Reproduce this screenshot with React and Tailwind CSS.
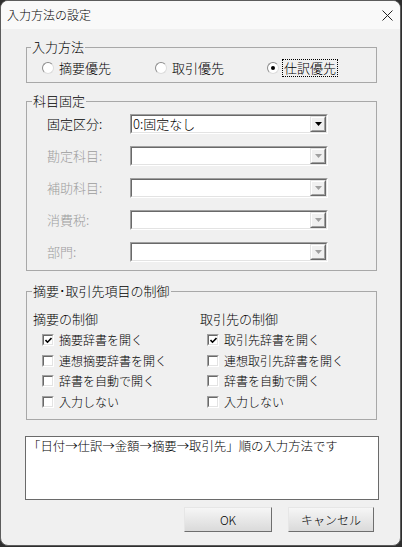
import React from "react";

function Radio({ label, checked, focused, width }) {
  return (
    <div className={`flex items-center h-[18px] ${width}`}>
      <span className="w-[12px] h-[12px] rounded-full bg-white border border-t-[#8c8c8c] border-l-[#8c8c8c] border-b-[#dcdcdc] border-r-[#dcdcdc] flex items-center justify-center shrink-0">
        {checked && <span className="w-[4px] h-[4px] rounded-full bg-black" />}
      </span>
      <span
        className={`ml-[3px] px-[1px] h-[18px] flex items-center border ${
          focused ? "border-dotted border-black" : "border-transparent"
        }`}
      >
        {label}
      </span>
    </div>
  );
}

function Arrow({ disabled }) {
  return (
    <svg width="7" height="4" viewBox="0 0 7 4">
      <polygon points="0,0 7,0 3.5,4" fill={disabled ? "#a0a0a0" : "#000"} />
    </svg>
  );
}

function Combo({ value, disabled }) {
  return (
    <div className="w-[198px] h-[20px] border border-t-[#a0a0a0] border-l-[#a0a0a0] border-b-white border-r-white">
      <div className="h-full flex items-center bg-white border border-t-[#696969] border-l-[#696969] border-b-[#e3e3e3] border-r-[#e3e3e3]">
        <span className="flex-1 pl-[1px] text-[13px] leading-[16px] text-black">
          {value}
        </span>
        <div className="w-[16px] h-[16px] border border-t-[#e3e3e3] border-l-[#e3e3e3] border-b-[#696969] border-r-[#696969]">
          <div className="w-full h-full flex items-center justify-center bg-[#f0f0f0] border border-t-white border-l-white border-b-[#a0a0a0] border-r-[#a0a0a0]">
            <Arrow disabled={disabled} />
          </div>
        </div>
      </div>
    </div>
  );
}

function Check({ label, checked }) {
  return (
    <div className="flex items-center h-[20.5px]">
      <span className="w-[12px] h-[12px] shrink-0 border border-t-[#a0a0a0] border-l-[#a0a0a0] border-b-white border-r-white">
        <span className="w-full h-full flex items-center justify-center bg-white border border-t-[#696969] border-l-[#696969] border-b-[#e3e3e3] border-r-[#e3e3e3]">
          {checked && (
            <svg width="7" height="7" viewBox="0 0 7 7">
              <path d="M0.5 3 L2.5 5.2 L6.5 1" stroke="#000" strokeWidth="1.6" fill="none" />
            </svg>
          )}
        </span>
      </span>
      <span className="ml-[5px] text-[12px] leading-[16px]">{label}</span>
    </div>
  );
}

const rows = [
  { label: "固定区分:", value: "0:固定なし", disabled: false },
  { label: "勘定科目:", value: "", disabled: true },
  { label: "補助科目:", value: "", disabled: true },
  { label: "消費税:", value: "", disabled: true },
  { label: "部門:", value: "", disabled: true },
];

const tekiyo = [
  { label: "摘要辞書を開く", checked: true },
  { label: "連想摘要辞書を開く", checked: false },
  { label: "辞書を自動で開く", checked: false },
  { label: "入力しない", checked: false },
];

const torihiki = [
  { label: "取引先辞書を開く", checked: true },
  { label: "連想取引先辞書を開く", checked: false },
  { label: "辞書を自動で開く", checked: false },
  { label: "入力しない", checked: false },
];

export default function App() {
  return (
    <div className="w-[402px] h-[547px] bg-[#2e2e2e] font-['Noto_Sans_CJK_JP',sans-serif] font-light text-black">
      <div className="w-[401px] h-[546px] bg-[#f0f0f0] rounded-[8px] border border-[#5c5c5c] overflow-hidden flex flex-col">
        {/* title bar */}
        <div className="h-[28px] shrink-0 bg-[#f9f9f9] flex items-center justify-between pl-[6px] pr-[7px]">
          <span className="text-[12px] leading-[16px]">入力方法の設定</span>
          <svg width="11" height="11" viewBox="0 0 11 11">
            <path d="M0.5 0.5 L10.5 10.5 M10.5 0.5 L0.5 10.5" stroke="#222" strokeWidth="1" />
          </svg>
        </div>

        {/* 入力方法 */}
        <fieldset className="ml-[25px] mt-[10px] w-[351px] border border-[#a8a8a8] p-0">
          <legend className="ml-[4px] px-[1px] text-[13px] leading-[16px]">入力方法</legend>
          <div className="flex pl-[15px] pt-[4px] pb-[5px] text-[13px] leading-[16px]">
            <Radio label="摘要優先" width="w-[113px]" />
            <Radio label="取引優先" width="w-[112px]" />
            <Radio label="仕訳優先" checked focused />
          </div>
        </fieldset>

        {/* 科目固定 */}
        <fieldset className="ml-[25px] mt-[10px] w-[351px] border border-[#a8a8a8] p-0">
          <legend className="ml-[5px] px-[1px] text-[13px] leading-[16px]">科目固定</legend>
          <div className="flex flex-col gap-[12px] pl-[20px] pt-[5px] pb-[8px]">
            {rows.map((r) => (
              <div key={r.label} className="flex items-center">
                <span
                  className={`w-[83px] text-[13px] leading-[16px] ${
                    r.disabled ? "text-[#9d9d9d]" : "text-black"
                  }`}
                >
                  {r.label}
                </span>
                <Combo value={r.value} disabled={r.disabled} />
              </div>
            ))}
          </div>
        </fieldset>

        {/* 摘要・取引先項目の制御 */}
        <fieldset className="ml-[25px] mt-[12px] w-[351px] border border-[#a8a8a8] p-0">
          <legend className="ml-[5px] px-[1px] text-[13px] leading-[16px]">摘要･取引先項目の制御</legend>
          <div className="grid grid-cols-[167px_1fr] pl-[6px] pt-[12px] pb-[7px]">
            <div>
              <div className="text-[13px] leading-[16px]">摘要の制御</div>
              <div className="mt-[3px] pl-[9px]">
                {tekiyo.map((c) => (
                  <Check key={c.label} label={c.label} checked={c.checked} />
                ))}
              </div>
            </div>
            <div>
              <div className="text-[13px] leading-[16px]">取引先の制御</div>
              <div className="mt-[3px] pl-[7px]">
                {torihiki.map((c) => (
                  <Check key={c.label} label={c.label} checked={c.checked} />
                ))}
              </div>
            </div>
          </div>
        </fieldset>

        {/* memo */}
        <div className="ml-[24px] mt-[16px] w-[354px] h-[64px] bg-white border border-[#6a6a6a] pl-[2px] pt-[1px] text-[12.4px] leading-[16px]">
          「日付→仕訳→金額→摘要→取引先」順の入力方法です
        </div>

        {/* buttons */}
        <div className="ml-[183px] mt-[7px] flex gap-[16px]">
          <button className="w-[88px] h-[25px] text-[12px] bg-gradient-to-b from-[#f6f6f6] to-[#dadada] border border-t-[#e6e6e6] border-l-[#e6e6e6] border-b-[#6e6e6e] border-r-[#6e6e6e]">
            OK
          </button>
          <button className="w-[86px] h-[25px] text-[12px] bg-gradient-to-b from-[#f6f6f6] to-[#dadada] border border-t-[#e6e6e6] border-l-[#e6e6e6] border-b-[#6e6e6e] border-r-[#6e6e6e]">
            キャンセル
          </button>
        </div>
      </div>
    </div>
  );
}
